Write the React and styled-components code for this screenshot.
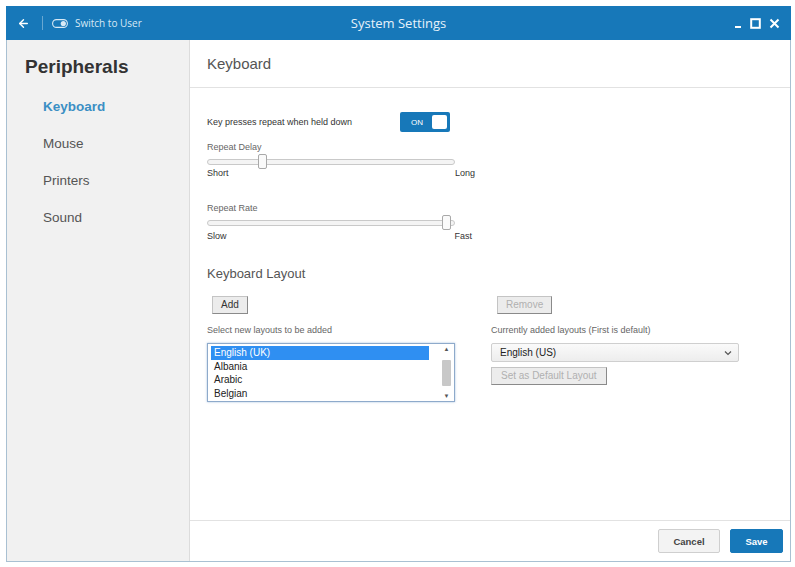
import React from "react";
import styled, { createGlobalStyle } from "styled-components";
import { ArrowLeft } from "lucide-react";

const GlobalStyle = createGlobalStyle`
  html, body {
    margin: 0;
    padding: 0;
    background: #ffffff;
  }
  body {
    font-family: "Liberation Sans", Arial, sans-serif;
  }
`;

const Page = styled.div`
  padding: 6px 0 0 6px;
`;

const Window = styled.div`
  width: 785px;
  height: 556px;
  box-sizing: border-box;
  display: flex;
  flex-direction: column;
  border: 1px solid #a9c0d2;
  border-top: none;
  background: #fff;
`;

const TitleBar = styled.div`
  height: 34px;
  margin: 0 -1px;
  background: #1778b9;
  display: flex;
  align-items: center;
  position: relative;
  color: #fff;
  font-family: "Open Sans", sans-serif;
`;

const TitleLeft = styled.div`
  display: flex;
  align-items: center;
  padding-left: 11px;
  gap: 7px;
  font-size: 10px;
  color: #d8e9f5;
`;

const Divider = styled.span`
  width: 1px;
  height: 14px;
  background: rgba(255, 255, 255, 0.35);
  margin: 0 2px 0 5px;
`;

const Title = styled.div`
  position: absolute;
  left: 0;
  right: 0;
  text-align: center;
  font-size: 13px;
  color: #e6f1f9;
  pointer-events: none;
`;

const WinControls = styled.div`
  margin-left: auto;
  display: flex;
  align-items: center;
  gap: 8px;
  padding-right: 11px;
`;

const Body = styled.div`
  flex: 1;
  display: flex;
  min-height: 0;
`;

const Sidebar = styled.div`
  width: 183px;
  background: #f1f1f1;
  border-right: 1px solid #dcdcdc;
  box-sizing: border-box;
  padding: 16px 0 0 18px;
`;

const SideTitle = styled.div`
  font-size: 19px;
  font-weight: bold;
  color: #333;
  margin-bottom: 21px;
`;

const NavItem = styled.div`
  font-size: 13.5px;
  color: ${(p) => (p.active ? "#3b8fc4" : "#555")};
  font-weight: ${(p) => (p.active ? "bold" : "normal")};
  padding-left: 18px;
  height: 37px;
  line-height: 16px;
`;

const Main = styled.div`
  flex: 1;
  display: flex;
  flex-direction: column;
`;

const Header = styled.div`
  height: 48px;
  box-sizing: border-box;
  border-bottom: 1px solid #e2e2e2;
  padding: 15px 0 0 17px;
  font-size: 15px;
  color: #555;
`;

const Content = styled.div`
  flex: 1;
  padding: 24px 0 0 17px;
  color: #555;
  font-size: 9px;
`;

const Row = styled.div`
  display: flex;
  align-items: center;
`;

const SmallText = styled.div`
  font-size: 9px;
  line-height: 12px;
  color: ${(p) => (p.dark ? "#333" : "#666")};
  width: ${(p) => p.w || "auto"};
  margin-top: ${(p) => p.mt || 0}px;
`;

const Toggle = styled.div`
  width: 50px;
  height: 20px;
  box-sizing: border-box;
  background: #1778b9;
  border-radius: 2px;
  display: flex;
  align-items: center;
  padding: 0 3px 0 11px;
  color: #fff;
  font-size: 8px;
  justify-content: space-between;
`;

const Knob = styled.span`
  width: 15px;
  height: 14px;
  border-radius: 2px;
  background: #fff;
`;

const SliderBox = styled.div`
  width: 248px;
  height: 12px;
  position: relative;
  margin-top: 2px;
`;

const Track = styled.div`
  position: absolute;
  left: 0;
  right: 0;
  top: 4px;
  height: 4px;
  border: 1px solid #c9c9c9;
  border-radius: 3px;
  background: #f4f4f4;
`;

const Thumb = styled.div`
  position: absolute;
  top: -1px;
  width: 7px;
  height: 13px;
  background: #fafafa;
  border: 1px solid #a9a9a9;
  border-radius: 2px;
`;

const Ends = styled.div`
  width: 268px;
  display: flex;
  justify-content: space-between;
  font-size: 9px;
  line-height: 12px;
  color: #333;
  margin-top: ${(p) => p.mt || 0}px;
  padding-right: ${(p) => p.pr || 0}px;
  box-sizing: border-box;
`;

const Section = styled.div`
  font-size: 13px;
  color: #555;
  margin-top: 24px;
  line-height: 16px;
`;

const Columns = styled.div`
  display: grid;
  grid-template-columns: 248px 248px;
  column-gap: 36px;
  margin-top: 14px;
`;

const Col = styled.div`
  display: flex;
  flex-direction: column;
  align-items: flex-start;
`;

const OldButton = styled.div`
  height: 18px;
  box-sizing: border-box;
  padding: 0 ${(p) => p.px || 8}px;
  margin-left: ${(p) => p.ml || 0}px;
  margin-top: ${(p) => p.mt || 0}px;
  font-size: 10px;
  line-height: 16px;
  color: ${(p) => (p.disabled ? "#b0b0b0" : "#333")};
  background: #ececec;
  border: 1px solid #c4c4c4;
  border-right-color: #8a8a8a;
  border-bottom-color: #8a8a8a;
`;

const ListBox = styled.div`
  margin-top: 7px;
  width: 248px;
  height: 59px;
  box-sizing: border-box;
  border: 1px solid #8eaacb;
  box-shadow: 0 0 2px rgba(80, 130, 190, 0.5);
  display: flex;
  padding: 2px 0 2px 3px;
  background: #fff;
`;

const Options = styled.div`
  flex: 1;
  padding-right: 12px;
`;

const Option = styled.div`
  font-size: 10px;
  line-height: 13.5px;
  padding-left: 3px;
  color: ${(p) => (p.selected ? "#fff" : "#222")};
  background: ${(p) => (p.selected ? "#2f8ff2" : "transparent")};
`;

const ScrollBar = styled.div`
  width: 11px;
  display: flex;
  flex-direction: column;
  align-items: center;
  justify-content: space-between;
  margin-right: 2px;
  font-size: 6px;
  color: #555;
`;

const ScrollThumb = styled.div`
  width: 9px;
  height: 26px;
  background: #c8c8c8;
  border-radius: 1px;
`;

const Select = styled.div`
  margin-top: 7px;
  width: 248px;
  height: 19px;
  box-sizing: border-box;
  border: 1px solid #cfcfcf;
  border-radius: 2px;
  background: linear-gradient(#fafafa, #ededed);
  display: flex;
  align-items: center;
  justify-content: space-between;
  padding: 0 6px 0 8px;
  font-size: 10px;
  color: #222;
`;

const Footer = styled.div`
  height: 41px;
  box-sizing: border-box;
  border-top: 1px solid #e2e2e2;
  display: flex;
  justify-content: flex-end;
  align-items: center;
  gap: 10px;
  padding: 0 7px 0 0;
`;

const ActionButton = styled.div`
  height: 24px;
  box-sizing: border-box;
  width: ${(p) => p.w}px;
  display: flex;
  align-items: center;
  justify-content: center;
  font-size: 9.5px;
  font-weight: bold;
  border-radius: 2px;
  color: ${(p) => (p.primary ? "#fff" : "#444")};
  background: ${(p) => (p.primary ? "#1778b9" : "#f3f3f3")};
  border: 1px solid ${(p) => (p.primary ? "#1778b9" : "#cfcfcf")};
`;

const UserToggleIcon = () => (
  <svg width="16" height="9" viewBox="0 0 16 9">
    <rect x="0.6" y="0.6" width="14.8" height="7.8" rx="3.9" fill="none" stroke="#d8e9f5" strokeWidth="1.1" />
    <circle cx="11.3" cy="4.5" r="2.6" fill="#d8e9f5" />
  </svg>
);

const Minimize = () => (
  <svg width="8" height="12" viewBox="0 0 8 12">
    <path d="M1 10h6" stroke="#fff" strokeWidth="2" />
  </svg>
);

const Maximize = () => (
  <svg width="11" height="11" viewBox="0 0 11 11">
    <rect x="1.2" y="1.2" width="8.6" height="8.6" fill="none" stroke="#fff" strokeWidth="2" />
  </svg>
);

const Close = () => (
  <svg width="11" height="11" viewBox="0 0 11 11">
    <path d="M1.5 1.5l8 8M9.5 1.5l-8 8" stroke="#fff" strokeWidth="2" />
  </svg>
);

const Chevron = () => (
  <svg width="8" height="6" viewBox="0 0 8 6">
    <path d="M1 1.5l3 3 3-3" fill="none" stroke="#555" strokeWidth="1.2" />
  </svg>
);

const navItems = ["Keyboard", "Mouse", "Printers", "Sound"];
const layouts = ["English (UK)", "Albania", "Arabic", "Belgian"];

export default function App() {
  return (
    <>
      <GlobalStyle />
      <Page>
        <Window>
          <TitleBar>
            <TitleLeft>
              <ArrowLeft size={13} strokeWidth={2.6} color="#ffffff" />
              <Divider />
              <UserToggleIcon />
              <span>Switch to User</span>
            </TitleLeft>
            <Title>System Settings</Title>
            <WinControls>
              <Minimize />
              <Maximize />
              <Close />
            </WinControls>
          </TitleBar>
          <Body>
            <Sidebar>
              <SideTitle>Peripherals</SideTitle>
              {navItems.map((n) => (
                <NavItem key={n} active={n === "Keyboard"}>
                  {n}
                </NavItem>
              ))}
            </Sidebar>
            <Main>
              <Header>Keyboard</Header>
              <Content>
                <Row>
                  <SmallText dark w="193px">Key presses repeat when held down</SmallText>
                  <Toggle>
                    <span>ON</span>
                    <Knob />
                  </Toggle>
                </Row>
                <SmallText mt={9}>Repeat Delay</SmallText>
                <SliderBox>
                  <Track />
                  <Thumb style={{ left: "51px" }} />
                </SliderBox>
                <Ends>
                  <span>Short</span>
                  <span>Long</span>
                </Ends>
                <SmallText mt={23}>Repeat Rate</SmallText>
                <SliderBox>
                  <Track />
                  <Thumb style={{ left: "235px" }} />
                </SliderBox>
                <Ends mt={2} pr={3}>
                  <span>Slow</span>
                  <span>Fast</span>
                </Ends>
                <Section>Keyboard Layout</Section>
                <Columns>
                  <Col>
                    <OldButton ml={5}>Add</OldButton>
                    <SmallText mt={10}>Select new layouts to be added</SmallText>
                    <ListBox>
                      <Options>
                        {layouts.map((l, i) => (
                          <Option key={l} selected={i === 0}>
                            {l}
                          </Option>
                        ))}
                      </Options>
                      <ScrollBar>
                        <span>▲</span>
                        <ScrollThumb />
                        <span>▼</span>
                      </ScrollBar>
                    </ListBox>
                  </Col>
                  <Col>
                    <OldButton ml={6} disabled>Remove</OldButton>
                    <SmallText mt={10}>Currently added layouts (First is default)</SmallText>
                    <Select>
                      <span>English (US)</span>
                      <Chevron />
                    </Select>
                    <OldButton mt={5} px={9} disabled>Set as Default Layout</OldButton>
                  </Col>
                </Columns>
              </Content>
              <Footer>
                <ActionButton w={62}>Cancel</ActionButton>
                <ActionButton w={53} primary>Save</ActionButton>
              </Footer>
            </Main>
          </Body>
        </Window>
      </Page>
    </>
  );
}
